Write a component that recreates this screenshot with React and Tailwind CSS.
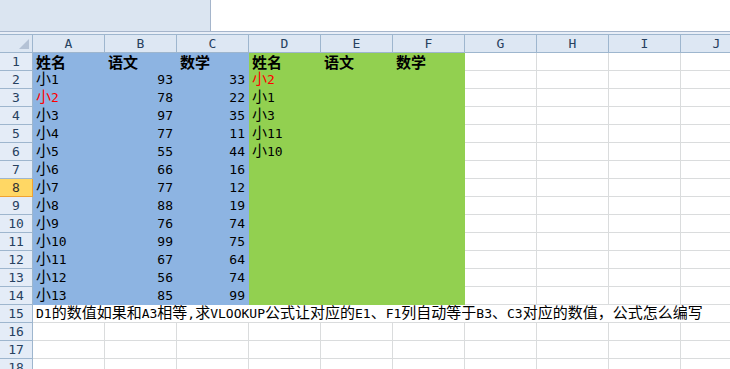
import React from "react";

const COLS = ["A", "B", "C", "D", "E", "F", "G", "H", "I", "J"];

const names = ["小1", "小2", "小3", "小4", "小5", "小6", "小7", "小8", "小9", "小10", "小11", "小12", "小13"];
const yuwen = [93, 78, 97, 77, 55, 66, 77, 88, 76, 99, 67, 56, 85];
const shuxue = [33, 22, 35, 11, 44, 16, 12, 19, 74, 75, 64, 74, 99];
const lookups = ["小2", "小1", "小3", "小11", "小10"];

// ascii runs get a half-width mono font, CJK gets the full-width font
const Txt = ({ s, bold }) => {
  const parts = String(s).split(/([\x00-\x7f]+)/);
  return (
    <span className="inline-flex items-baseline">
      {parts.map((p, i) =>
        !p ? null : /^[\x00-\x7f]+$/.test(p) ? (
          <span key={i} className="font-['DejaVu_Sans_Mono',monospace] text-[13px]">
            {p}
          </span>
        ) : (
          <span
            key={i}
            className={`font-['Noto_Sans_CJK_SC',sans-serif] text-[15px] ${bold ? "font-bold" : ""}`}
          >
            {p}
          </span>
        )
      )}
    </span>
  );
};

const Cell = ({ value, fill, align, red, bold }) => {
  const bg =
    fill === "blue"
      ? "bg-[#8db4e2] border-[#8db4e2]"
      : fill === "green"
      ? "bg-[#92d050] border-[#92d050]"
      : "bg-white border-[#dadcdd]";
  return (
    <div
      className={`w-[72px] h-[18px] shrink-0 border-r border-b flex items-end leading-[17px] whitespace-nowrap ${bg} ${
        align === "right" ? "justify-end pr-[3px]" : "pl-[3px]"
      } ${red ? "text-[#ff0000]" : "text-black"}`}
    >
      {value !== undefined && value !== "" && <Txt s={value} bold={bold} />}
    </div>
  );
};

const RowHead = ({ n, active }) => (
  <div
    className={`w-[33px] h-[18px] shrink-0 border-r border-b flex items-center justify-center leading-[16px] ${
      active
        ? "bg-[#ffd764] border-[#f0a231] text-[#333]"
        : "bg-[#e4ecf7] border-[#9eb6ce] text-[#27415f]"
    }`}
  >
    <Txt s={n} />
  </div>
);

export default function App() {
  const rows = [];
  rows.push(
    <div key="r1" className="flex">
      <RowHead n={1} />
      {["姓名", "语文", "数学"].map((h) => (
        <Cell key={"a" + h} value={h} fill="blue" bold />
      ))}
      {["姓名", "语文", "数学"].map((h) => (
        <Cell key={"d" + h} value={h} fill="green" bold />
      ))}
      {COLS.slice(6).map((c) => (
        <Cell key={c} />
      ))}
    </div>
  );
  for (let i = 0; i < 13; i++) {
    const r = i + 2;
    rows.push(
      <div key={"r" + r} className="flex">
        <RowHead n={r} active={r === 8} />
        <Cell value={names[i]} fill="blue" red={r === 3} />
        <Cell value={yuwen[i]} fill="blue" align="right" />
        <Cell value={shuxue[i]} fill="blue" align="right" />
        <Cell value={lookups[i] || ""} fill="green" red={r === 2} />
        <Cell fill="green" />
        <Cell fill="green" />
        {COLS.slice(6).map((c) => (
          <Cell key={c} />
        ))}
      </div>
    );
  }

  return (
    <div className="w-[730px] h-[369px] overflow-hidden bg-white">
      {/* name box / formula bar */}
      <div className="h-[32px] flex border-b border-[#a5b5cb]">
        <div className="w-[211px] h-full bg-[#dbe5f1] border-r border-[#a5b5cb]" />
        <div className="flex-1 bg-white" />
      </div>
      <div className="h-[2px] bg-[#e8eef7]" />

      {/* column headers */}
      <div className="flex h-[19px] border-t border-[#9eb6ce]">
        <div className="w-[33px] h-[18px] shrink-0 bg-[#dde7f3] border-r border-b border-[#9eb6ce] relative">
          <svg className="absolute right-[3px] bottom-[3px]" width="10" height="10" viewBox="0 0 10 10">
            <polygon points="10,0 10,10 0,10" fill="#b4c2d5" />
          </svg>
        </div>
        {COLS.map((c) => (
          <div
            key={c}
            className="w-[72px] h-[18px] shrink-0 bg-[#dde7f3] border-r border-b border-[#9eb6ce] flex items-center justify-center text-[#27415f] leading-[16px]"
          >
            <Txt s={c} />
          </div>
        ))}
      </div>

      {rows}

      {/* row 15 with overflowing text */}
      <div className="flex">
        <RowHead n={15} />
        <div className="flex-1 h-[18px] border-b border-[#dadcdd] flex items-end pl-[3px] leading-[17px] whitespace-nowrap text-black">
          <Txt s="D1的数值如果和A3相等,求VLOOKUP公式让对应的E1、F1列自动等于B3、C3对应的数值，公式怎么编写" />
        </div>
      </div>

      {[16, 17, 18].map((r) => (
        <div key={r} className="flex">
          <RowHead n={r} />
          {COLS.map((c) => (
            <Cell key={c} />
          ))}
        </div>
      ))}
    </div>
  );
}
